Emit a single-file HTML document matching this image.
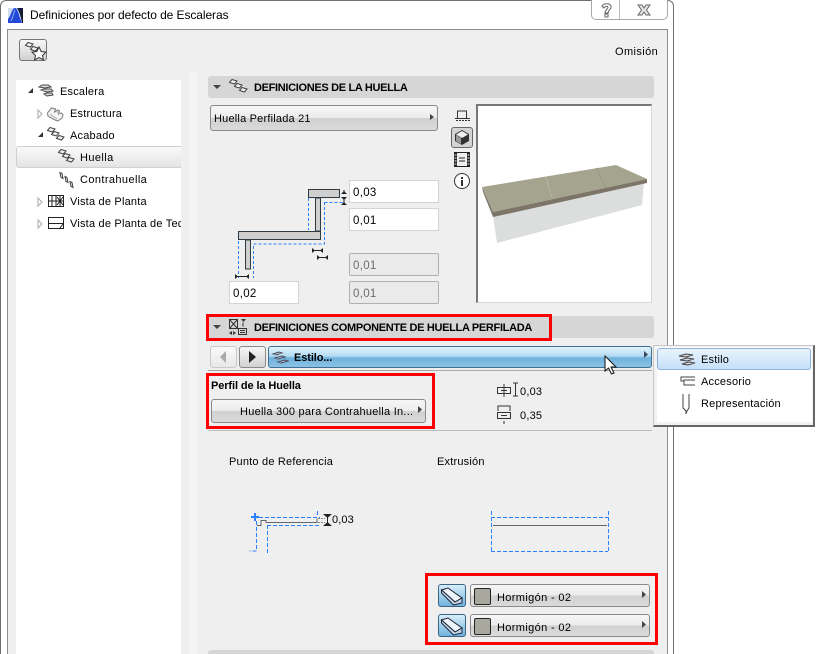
<!DOCTYPE html>
<html><head><meta charset="utf-8">
<style>
html,body{margin:0;padding:0;background:#fff}
#w{position:relative;width:826px;height:654px;overflow:hidden;background:#fff;font-family:"Liberation Sans",sans-serif;font-size:11px;color:#000}
#w div{position:absolute;box-sizing:border-box}
.t{white-space:nowrap;letter-spacing:.2px;line-height:14px;margin-top:1px}
.b{font-weight:bold;letter-spacing:-.32px}
.hd{left:208px;width:446px;height:22px;background:#d6d6d6;border-radius:3px}
.pop{background:linear-gradient(#f6f6f6 0,#ececec 48%,#d0d0d0 52%,#dadada 100%);border:1px solid #8a8a8a;border-radius:3px}
.inp{background:#fff;border:1px solid #d4d4d4;height:23px;padding:5px 0 0 3px;letter-spacing:.3px;line-height:14px;font-size:11.5px}
.dis{background:#eaeaea;border:1px solid #b0b0b0;color:#6d6d6d;border-radius:2px}
.red{border:3px solid #f00}
svg{position:absolute;left:0;top:0}
</style></head><body><div id="w">
<div style="left:0;top:0;width:674px;height:654px;background:#fff;border:1px solid #6e6e6e;border-bottom:0;border-radius:6px 6px 0 0"></div>
<div style="left:7px;top:29px;width:661px;height:625px;background:#efefef;border:1px solid #8c8c8c;border-bottom:0"></div>
<div style="left:591px;top:0;width:77px;height:20px;background:#fff;border:1px solid #a8a8a8;border-top:0;border-radius:0 0 5px 5px"></div>
<div style="left:619px;top:0;width:1px;height:19px;background:#bbb"></div>
<div class="t" style="left:30px;top:7px;font-size:12px;letter-spacing:-.08px">Definiciones por defecto de Escaleras</div>
<div class="t" style="left:615px;top:44px;letter-spacing:.4px">Omisión</div>

<div style="left:19px;top:39px;width:28px;height:22px;background:linear-gradient(#f8f8f8,#d0d0d0);border:1px solid #777;border-radius:3px"></div>
<div style="left:16px;top:80px;width:165px;height:574px;background:#fff"></div>
<div style="left:189px;top:72px;width:8px;height:582px;background:#f4f4f4"></div>
<div style="left:16px;top:146px;width:165px;height:22px;background:linear-gradient(#fafafa,#e4e4e4);border:1px solid #d0d0d0;border-right:0;border-radius:3px 0 0 3px"></div>
<div class="t" style="left:60px;top:84px">Escalera</div>
<div class="t" style="left:70px;top:106px">Estructura</div>
<div class="t" style="left:70px;top:128px">Acabado</div>
<div class="t" style="left:80px;top:150px;letter-spacing:.4px">Huella</div>
<div class="t" style="left:80px;top:172px;letter-spacing:.4px">Contrahuella</div>
<div class="t" style="left:70px;top:194px">Vista de Planta</div>
<div class="t" style="left:70px;top:216px;width:111px;overflow:hidden">Vista de Planta de Tec</div>

<div class="hd" style="top:76px"></div>
<div class="t b" style="left:254px;top:80px">DEFINICIONES DE LA HUELLA</div>
<div class="pop" style="left:210px;top:105px;width:228px;height:26px"></div>
<div class="t" style="left:214px;top:111px">Huella Perfilada 21</div>
<div style="left:476px;top:104px;width:176px;height:199px;background:#fff;border:1px solid #d8d8d8;border-top:2px solid #777;border-left:2px solid #777"></div>
<div style="left:451px;top:127px;width:22px;height:21px;background:#d4d4d4;border:1px solid #666;border-radius:3px"></div>

<div class="inp" style="left:349px;top:180px;width:90px">0,03</div>
<div class="inp" style="left:349px;top:208px;width:90px">0,01</div>
<div class="inp dis" style="left:349px;top:253px;width:90px">0,01</div>
<div class="inp dis" style="left:349px;top:281px;width:90px">0,01</div>
<div class="inp" style="left:229px;top:281px;width:70px">0,02</div>

<div class="hd" style="top:316px"></div>
<div class="t b" style="left:254px;top:320px">DEFINICIONES COMPONENTE DE HUELLA PERFILADA</div>
<div class="red" style="left:206px;top:314px;width:346px;height:27px"></div>

<div style="left:210px;top:346px;width:27px;height:22px;background:linear-gradient(#fafafa,#e8e8e8);border:1px solid #c8c8c8;border-radius:3px"></div>
<div style="left:239px;top:346px;width:27px;height:22px;background:linear-gradient(#f6f6f6,#d2d2d2);border:1px solid #8a8a8a;border-radius:3px"></div>
<div style="left:268px;top:346px;width:384px;height:22px;background:linear-gradient(#e4f3fc 0,#b4dcf3 45%,#6fb2dd 55%,#8cc2e4 100%);border:1px solid #3f6f93;border-radius:3px"></div>
<div class="t b" style="left:294px;top:350px;letter-spacing:-.1px">Estilo...</div>
<div style="left:208px;top:370px;width:444px;height:1px;background:#a8a8a8"></div>
<div style="left:208px;top:430px;width:444px;height:1px;background:#bdbdbd"></div>

<div class="t b" style="left:211px;top:378px;letter-spacing:-.1px">Perfil de la Huella</div>
<div class="pop" style="left:211px;top:399px;width:215px;height:24px"></div>
<div class="t" style="left:240px;top:404px;letter-spacing:.26px">Huella 300 para Contrahuella In...</div>
<div class="red" style="left:206px;top:373px;width:229px;height:56px"></div>
<div class="t" style="left:520px;top:384px;letter-spacing:.2px">0,03</div>
<div class="t" style="left:520px;top:408px;letter-spacing:.2px">0,35</div>

<div style="left:653px;top:345px;width:162px;height:82px;background:#f2f2f2;border:1px solid #c8c8c8;border-right:2px solid #666;border-bottom:2px solid #666"></div>
<div style="left:657px;top:347px;width:155px;height:75px;background:#fff"></div>
<div style="left:657px;top:348px;width:154px;height:22px;background:linear-gradient(#e8f3fd,#c6e0fa);border:1px solid #8db4e0;border-radius:3px"></div>
<div class="t" style="left:701px;top:352px">Estilo</div>
<div class="t" style="left:701px;top:374px">Accesorio</div>
<div class="t" style="left:701px;top:396px">Representación</div>

<div class="t" style="left:229px;top:454px">Punto de Referencia</div>
<div class="t" style="left:437px;top:454px">Extrusión</div>
<div class="t" style="left:332px;top:512px;letter-spacing:.1px">0,03</div>

<div class="red" style="left:425px;top:573px;width:233px;height:72px"></div>
<div style="left:438px;top:584px;width:28px;height:23px;background:linear-gradient(#d8eefa,#6fb2dd);border:1px solid #3a6484;border-radius:3px"></div>
<div style="left:438px;top:614px;width:28px;height:23px;background:linear-gradient(#d8eefa,#6fb2dd);border:1px solid #3a6484;border-radius:3px"></div>
<div class="pop" style="left:470px;top:584px;width:180px;height:23px"></div>
<div class="pop" style="left:470px;top:614px;width:180px;height:23px"></div>
<div style="left:474px;top:588px;width:17px;height:17px;background:#a8a89e;border:1px solid #222;border-radius:2px"></div>
<div style="left:474px;top:618px;width:17px;height:17px;background:#a8a89e;border:1px solid #222;border-radius:2px"></div>
<div class="t" style="left:497px;top:590px;letter-spacing:.36px">Hormigón - 02</div>
<div class="t" style="left:497px;top:620px;letter-spacing:.36px">Hormigón - 02</div>
<div style="left:208px;top:650px;width:446px;height:4px;background:#d6d6d6;border-radius:3px 3px 0 0"></div>

<svg width="826" height="654" viewBox="0 0 826 654" fill="none">
<defs>
<g id="tr" stroke="#444" fill="#f2f2f2"><path d="M.5 3.500l2.500-3l5 1.500l-2.500 3z"/></g>
<g id="rs" stroke="#444" fill="#f2f2f2"><path d="M1 .5l2 1l1 5l-2-1z"/></g>
</defs>
<!-- app icon -->
<rect x="8" y="8" width="15" height="15" fill="#cfdcf2"/>
<path d="M8 23V19C11 16 12 8 15 8C18 8 19 17 22 23Z" fill="#2347d8"/>
<path d="M20 8h3v15h-1C21 17 19 11 17 8z" fill="#141a3a"/>
<path d="M11 21C13 17 14 12 15 10" stroke="#8fb0f0"/>
<!-- help & close -->
<path d="M602 6c2-3 8-3 9 0c1 3-3 4-3 7h-3c0-3 3-4 3-6c0-1-3-1-4 1z M605 14h3v3h-3z" stroke="#666" fill="#fff"/>
<path d="M638 5h4l2 3l2-3h4l-3.500 5l3.500 5h-4l-2-3l-2 3h-4l3.500-5z" stroke="#666" fill="#e4e4e4"/>
<!-- favourites icon -->
<use href="#tr" x="25" y="42"/><use href="#tr" x="30" y="46"/>
<path d="M39 47l2.200 4.500l4.800.6l-3.500 3.300l.9 4.400l-4.400-2.200l-4.400 2.200l.9-4.400l-3.500-3.300l4.800-.6z" fill="#fff" stroke="#333"/>
<!-- tree arrows -->
<path d="M33 88v5h-5z" fill="#333"/><path d="M43 132v5h-5z" fill="#333"/>
<path d="M38 110l4 4l-4 4z M38 198l4 4l-4 4z M38 220l4 4l-4 4z" stroke="#aaa" fill="#fff"/>
<!-- tree icons -->
<g stroke="#444" fill="#ddd"><path d="M39 87l3-2h6l3 2l-6 1z M41 90l3-1l7 0l2 2l-6 1z M44 94l3-1l5 0l1 2l-6 1z"/></g>
<path d="M47.500 113l4-5l4 1l-1 3l3-2l2 1l-1 3l3-1l1.500 2l-1 3l-4 3l-3-1l-7-4z" stroke="#777" fill="#f4f4f4"/>
<path d="M50 114l7 5M55 110l5 4" stroke="#aaa"/>
<use href="#tr" x="47" y="127"/><use href="#tr" x="51" y="131"/><use href="#tr" x="56" y="135"/>
<use href="#tr" x="58" y="149"/><use href="#tr" x="62" y="153"/><use href="#tr" x="66" y="157"/>
<use href="#rs" x="59" y="172"/><use href="#rs" x="64" y="176"/><use href="#rs" x="69" y="181"/>
<rect x="48.500" y="195.500" width="15" height="11" stroke="#222" fill="#fff"/>
<path d="M52 196v10M56 196v10M60 196v10M49 201h14M57 197l6 8M63 197l-6 8" stroke="#222"/>
<rect x="48.500" y="217.500" width="15" height="11" stroke="#222" fill="#fff"/><path d="M49 223.500h14M60 228l3-4" stroke="#222"/>
<!-- section headers -->
<path d="M213 85h8l-4 4z M213 325h8l-4 4z" fill="#444"/>
<use href="#tr" x="229" y="79"/><use href="#tr" x="234" y="83"/><use href="#tr" x="239" y="87"/>
<g stroke="#333"><rect x="229.500" y="319.500" width="8" height="9"/><path d="M230 320l7 8M237 320l-7 8"/><rect x="238.500" y="328.500" width="8" height="6"/><path d="M240 330.500h5M240 332.500h5M243 322.500v4"/></g>
<path d="M241 319h5l-2.500 3zM229 333l3-2v4zM236 333l-3-2v4z" fill="#333"/>
<!-- pop arrows -->
<path d="M430 114v6l4-3z" fill="#444"/><path d="M418 406v7l4-3.500z" fill="#444"/>
<path d="M642 591v7l4-3.500z M642 621v7l4-3.500z" fill="#444"/>
<path d="M644 351v7l4-3.500z" fill="#3a4a58"/>
<!-- nav arrows -->
<path d="M226 351v12l-6-6z" fill="#aaa"/><path d="M249 351v12l7-6z" fill="#222"/>
<!-- Estilo icon -->
<g stroke="#445" fill="#cde"><path d="M273 354l6-2l3 1l-6 2z M275 358l7-2l3 1l-7 2z M278 362l7-2l3 1l-7 2z"/></g>
<!-- cursor -->
<path d="M605 356v15l3.500-3l3 6l2.500-1l-3-6h5z" fill="#fff" stroke="#111"/>
<!-- menu icons -->
<g stroke="#444" fill="#ddd"><path d="M679 356l7-2l7 1l-7 2z M680 360l7-2l7 1l-7 2z M682 364l7-2l6 1l-7 2z"/></g>
<path d="M695 377h-14v4h3M695 380h-11v5h11" stroke="#444" fill="none"/>
<path d="M683 394v14l3 3v3l1-3l2-3v-14" stroke="#444" fill="#fff"/>
<!-- side view icons -->
<path d="M457.500 118v-7h9v7M455 118.500h15" stroke="#333"/>
<path d="M456 120.500h14" stroke="#333" stroke-dasharray="2 1"/>
<path d="M462 130l7 4v7l-7 4l-7-4v-7z" fill="#333"/><path d="M462 131l6 3.500l-6 3.500l-6-3.500z" fill="#eee"/><path d="M456 135l5 3v6l-5-3z" fill="#999"/>
<path d="M454 152h3v15h-3zM467 152h3v15h-3z" fill="#222"/>
<path d="M454.500 155h2M454.500 158h2M454.500 161h2M454.500 164h2M467.500 155h2M467.500 158h2M467.500 161h2M467.500 164h2" stroke="#eee"/>
<path d="M457 152.500h10M457 166.500h10M459 158h6M459 161h6" stroke="#222"/>
<circle cx="462" cy="181" r="7.500" stroke="#333" fill="#fff"/><rect x="461" y="177" width="2" height="2" fill="#333"/><rect x="461" y="180" width="2" height="6" fill="#333"/>
<!-- stairs diagram -->
<g stroke="#2f3a42" fill="#cfcfcf"><rect x="308.500" y="189.500" width="31" height="8"/><rect x="315.500" y="198" width="5" height="33"/><rect x="238.500" y="231.500" width="82" height="8"/><rect x="245.500" y="240" width="5" height="29"/></g>
<g stroke="#2a80ff" stroke-dasharray="3 2"><path d="M308.500 198v32M324.500 202v42h-71v34M324.500 202.500h19M238.500 241v37"/></g>
<path d="M344 190v4M344 197v7M236 276.500h13M314 250.500h9M319 257.500h9" stroke="#222"/>
<path d="M341 194h6l-3-3zM341 197h6l-3 3zM341 205h6l-3-3zM235 274v5l3-2.500zM249 274v5l-3-2.500zM312 248v5l3-2.500zM323 248v5l-3-2.500zM317 255v5l3-2.500zM328 255v5l-3-2.500z" fill="#222"/>
<!-- size icons -->
<g stroke="#333"><rect x="497.500" y="387.500" width="13" height="6"/><path d="M504 384v13M501 390.500h6M513 383h5M513 396h5M515.500 383v13"/><rect x="497.500" y="412.500" width="13" height="6"/><path d="M504 421v3M498 411v-5h12v5M501 415.500h6"/></g>
<!-- profile diagrams -->
<path d="M255 513v8M251 517h8" stroke="#2a80ff" stroke-width="2"/>
<path d="M259 517.500h61M256.500 521v30h-7M267.500 525v30M267 525.500h53M317.500 511v6M491.500 511v42M608.500 511v42M491 517.500h117M491 551.500h117" stroke="#2a80ff" stroke-dasharray="4 2"/>
<path d="M257 525.500h4v-5h5v2h51v-4M493 525.500h114" stroke="#666"/>
<path d="M318 518.500h7M318 522.500h7" stroke="#888" stroke-dasharray="2 1"/>
<path d="M327.500 515v11" stroke="#222"/><path d="M323 514h9l-4.500 4zM323 526h9l-4.500-4z" fill="#222"/>
<!-- material icons -->
<g stroke="#223"><path d="M441.500 590l6.500-2l14 10l-7 4z" fill="#eef6fb"/><path d="M441.500 590v3l12 12l8.500-2v-5l-7 4z" fill="#bcd8ea"/><path d="M441.500 620l6.500-2l14 10l-7 4z" fill="#eef6fb"/><path d="M441.500 620v3l12 12l8.500-2v-5l-7 4z" fill="#bcd8ea"/></g>
<!-- 3D preview -->
<path d="M493 216L644 183L642 205L497 243Z" fill="#dcdedd"/>
<path d="M482 187L616 165L647 179L493 212Z" fill="#a5a48f"/>
<path d="M482 187L483 192L493 217L647 183L647 179L493 212Z" fill="#7d7668"/>
<path d="M546 177L552 198" stroke="#b6b5a2"/>
<path d="M596 168L606 188" stroke="#999884"/>
</svg>
</div></body></html>
